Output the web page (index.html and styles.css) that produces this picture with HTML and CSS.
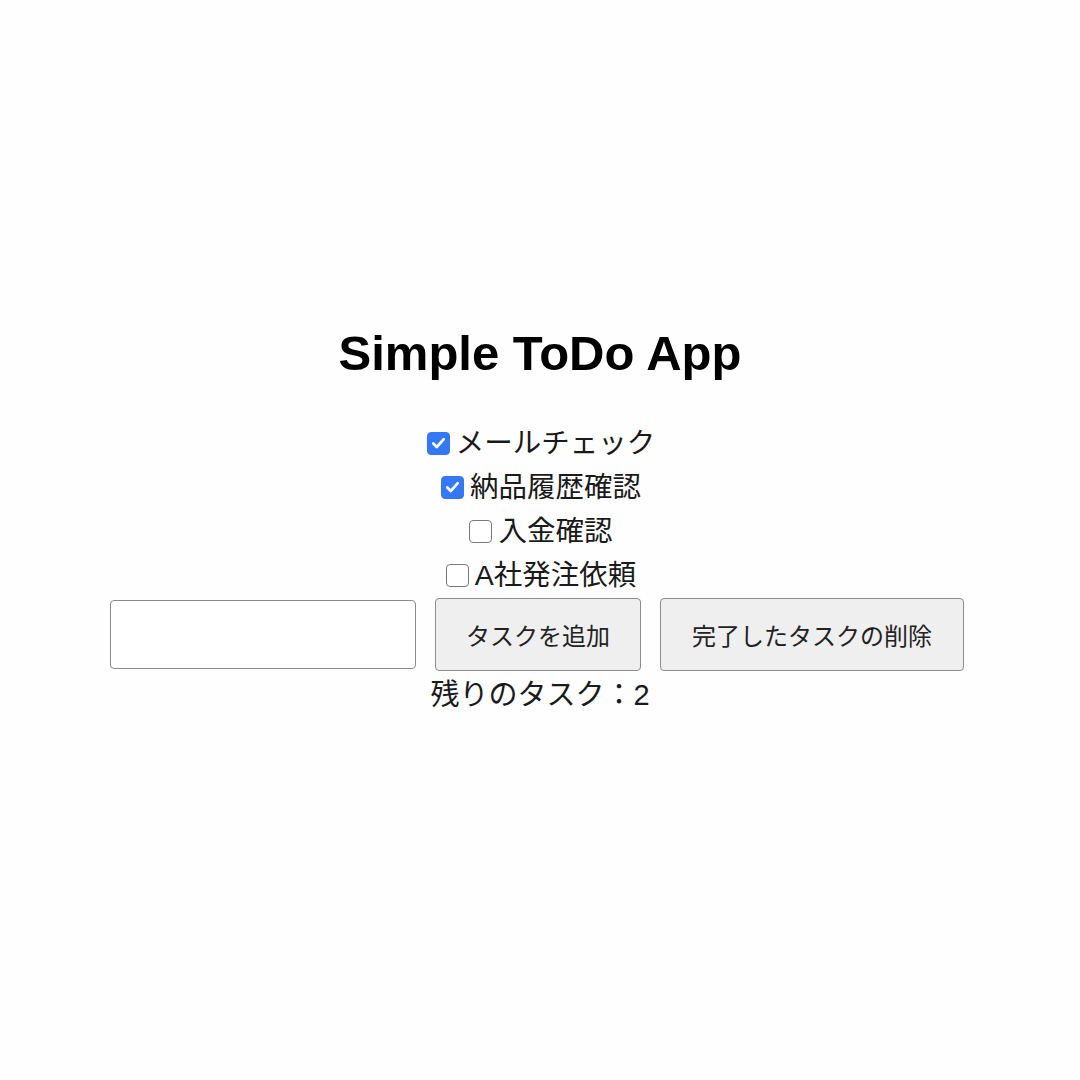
FILE: index.html
```html
<!DOCTYPE html>
<html lang="ja">
<head>
<meta charset="utf-8">
<title>Simple ToDo App</title>
<link rel="stylesheet" href="styles.css">
</head>
<body>
<div class="app">
  <h1 class="title">Simple ToDo App</h1>
  <ul class="tasks">
    <li class="task"><span class="box checked"><svg viewBox="0 0 22 22" width="22" height="22"><path d="M5.5 11.5 L9.2 15.2 L16.5 7" fill="none" stroke="#fff" stroke-width="2.8" stroke-linecap="round" stroke-linejoin="round"/></svg></span><span class="label">メールチェック</span></li>
    <li class="task"><span class="box checked"><svg viewBox="0 0 22 22" width="22" height="22"><path d="M5.5 11.5 L9.2 15.2 L16.5 7" fill="none" stroke="#fff" stroke-width="2.8" stroke-linecap="round" stroke-linejoin="round"/></svg></span><span class="label">納品履歴確認</span></li>
    <li class="task"><span class="box"></span><span class="label">入金確認</span></li>
    <li class="task"><span class="box"></span><span class="label">A社発注依頼</span></li>
  </ul>
  <div class="controls">
    <input class="field" type="text">
    <button class="btn btn-add" type="button">タスクを追加</button>
    <button class="btn btn-del" type="button">完了したタスクの削除</button>
  </div>
  <p class="remaining">残りのタスク：2</p>
</div>
</body>
</html>
```
FILE: styles.css
```css
html, body {
  margin: 0;
  padding: 0;
  background: #fefefe;
}
body {
  font-family: "Liberation Sans", "Noto Sans CJK JP", sans-serif;
  color: #111;
}
.app {
  display: flex;
  flex-direction: column;
  align-items: center;
  padding-top: 325px;
}
.title {
  margin: 0 0 40px;
  font-size: 49px;
  line-height: 56px;
  font-weight: 700;
  color: #000;
}
.tasks {
  list-style: none;
  margin: 0;
  padding: 0;
  display: flex;
  flex-direction: column;
  align-items: center;
}
.task {
  height: 44px;
  display: flex;
  align-items: center;
  font-size: 28.5px;
  line-height: 44px;
  color: #1a1a1a;
}
.box {
  width: 23px;
  height: 23px;
  box-sizing: border-box;
  border: 1.5px solid #7a7a7a;
  border-radius: 4px;
  margin-right: 6px;
  margin-left: 2px;
  background: #fff;
  display: flex;
  align-items: center;
  justify-content: center;
}
.box.checked {
  background: #3478f6;
  border-color: #3478f6;
}
.box svg {
  width: 22px;
  height: 22px;
}
.controls {
  display: flex;
  align-items: center;
  gap: 19px;
  margin-top: 1px;
  margin-right: 6px;
}
.field {
  width: 306px;
  height: 69px;
  box-sizing: border-box;
  border: 1.5px solid #8a8a8a;
  border-radius: 4px;
  background: #fff;
  margin: 0;
  padding: 0 8px;
  font-size: 24px;
}
.btn {
  height: 73px;
  box-sizing: border-box;
  border: 1.5px solid #8c8c8c;
  border-radius: 4px;
  background: #efefef;
  font-family: "Liberation Sans", "Noto Sans CJK JP", sans-serif;
  font-size: 24px;
  color: #222;
  margin: 0;
  padding: 0;
}
.btn-add {
  width: 206px;
}
.btn-del {
  width: 304px;
}
.remaining {
  margin: 2px 0 0;
  font-size: 29px;
  line-height: 44px;
  color: #1a1a1a;
}
```
